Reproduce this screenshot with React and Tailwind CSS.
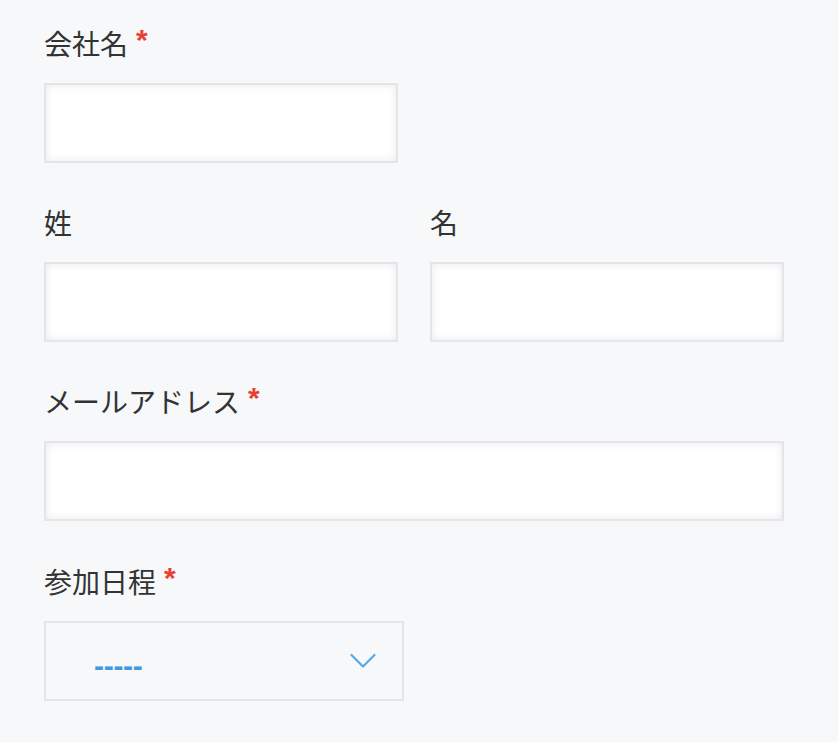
import React from "react";

const font = { fontFamily: '"Noto Sans CJK JP", "Noto Sans", sans-serif' };

function Label({ children, required }) {
  return (
    <label className="flex items-start h-9 leading-9 text-[28px] text-[#333333] mb-[22px]">
      <span>{children}</span>
      {required && (
        <span className="ml-2 text-[#e8402f] font-bold font-['Liberation_Sans'] leading-[30px] text-[30px]">
          *
        </span>
      )}
    </label>
  );
}

function Input() {
  return (
    <input
      type="text"
      className="block w-full h-20 bg-white border-2 border-[#e3e5e8] shadow-[inset_0_0_8px_rgba(0,0,0,0.09)] outline-none px-4 text-[24px]"
    />
  );
}

export default function App() {
  return (
    <div className="min-h-[742px] bg-[#f7f8fa] px-11 pt-[25px]" style={font}>
      <div className="w-[740px]">
        <div className="grid grid-cols-2 gap-x-8">
          <div>
            <Label required>会社名</Label>
            <Input />
          </div>
        </div>

        <div className="grid grid-cols-2 gap-x-8 mt-[41px]">
          <div>
            <Label>姓</Label>
            <Input />
          </div>
          <div>
            <Label>名</Label>
            <Input />
          </div>
        </div>

        <div className="mt-[41px]">
          <Label required>メールアドレス</Label>
          <Input />
        </div>

        <div className="mt-[42px]">
          <Label required>参加日程</Label>
          <div className="relative w-[360px] h-20 border-2 border-[#e3e5e8] bg-[#f7f8fa] flex items-center">
            <span className="pl-12 pt-2 text-[30px] font-bold text-[#3d9be3] tracking-[-0.3px] font-['Liberation_Sans']">
              -----
            </span>
            <svg
              className="absolute right-[26px] top-[30px]"
              width="26"
              height="16"
              viewBox="0 0 26 16"
              fill="none"
            >
              <path
                d="M1.5 2 L13 13.5 L24.5 2"
                stroke="#5aa9e6"
                strokeWidth="2.2"
                strokeLinecap="round"
                strokeLinejoin="round"
              />
            </svg>
          </div>
        </div>
      </div>
    </div>
  );
}
